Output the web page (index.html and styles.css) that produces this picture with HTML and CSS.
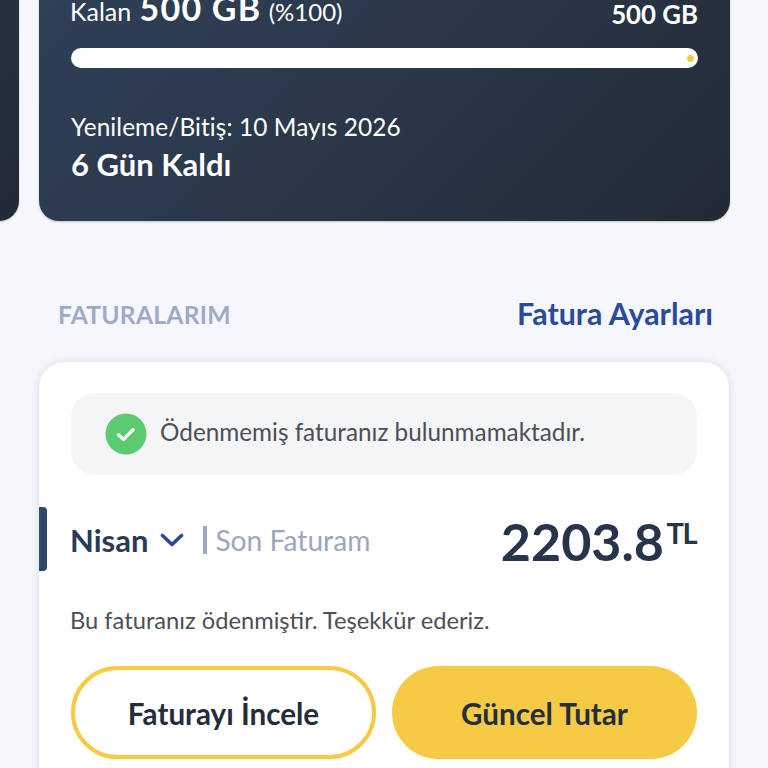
FILE: index.html
```html
<!DOCTYPE html>
<html lang="tr">
<head>
<meta charset="utf-8">
<title>Faturalarım</title>
<link rel="stylesheet" href="styles.css">
</head>
<body>
<div class="page">
  <div class="carousel">
    <div class="plan plan-side"></div>
    <div class="plan">
      <div class="usage">
        <div class="remain">Kalan <b>500 GB</b> <span class="pct">(%100)</span></div>
        <div class="total">500 GB</div>
      </div>
      <div class="bar"><span class="dot"></span></div>
      <div class="renew">Yenileme/Bitiş: 10 Mayıs 2026</div>
      <div class="days">6 Gün Kaldı</div>
    </div>
  </div>
  <div class="section-head">
    <span class="section-title">FATURALARIM</span>
    <span class="section-link">Fatura Ayarları</span>
  </div>
  <div class="bill-card">
    <div class="notice">
      <svg class="check" viewBox="0 0 42 42" aria-hidden="true"><circle cx="21" cy="21" r="20.5" fill="#5acb6f"/><path d="M13.5 21.8l5 4.6 9.5-9.6" fill="none" stroke="#fff" stroke-width="3.4" stroke-linecap="round" stroke-linejoin="round"/></svg>
      <span>Ödenmemiş faturanız bulunmamaktadır.</span>
    </div>
    <div class="bill-row">
      <span class="marker"></span>
      <div class="bill-left">
        <span class="month">Nisan</span>
        <svg class="chev" viewBox="0 0 24 14" aria-hidden="true"><path d="M2.5 2.5l9.5 9 9.5-9" fill="none" stroke="#2c4a9a" stroke-width="3.6" stroke-linecap="round" stroke-linejoin="round"/></svg>
        <span class="sep"></span>
        <span class="last">Son Faturam</span>
      </div>
      <div class="amount">2203.8<sup>TL</sup></div>
    </div>
    <p class="paid">Bu faturanız ödenmiştir. Teşekkür ederiz.</p>
    <div class="actions">
      <div class="btn btn-outline">Faturayı İncele</div>
      <div class="btn btn-solid">Güncel Tutar</div>
    </div>
  </div>
</div>
</body>
</html>
```
FILE: styles.css
```css
* { box-sizing: border-box; }
html, body { margin: 0; padding: 0; }
body { background: #f5f7fa; font-family: "Lato", "Liberation Sans", sans-serif; }
.page { width: 768px; height: 768px; overflow: hidden; background: #f5f7fa; }

.carousel { display: flex; gap: 20px; height: 221px; margin-left: -672px; align-items: flex-end; }
.plan { flex: none; width: 691px; height: 300px; padding: 0 32px; border-radius: 0 0 20px 20px; background: linear-gradient(135deg, #2f4159 0%, #2b384a 50%, #222a36 100%); color: #fff; display: flex; flex-direction: column; justify-content: flex-end; box-shadow: 0 1px 2px rgba(40,50,70,.25); }
.usage { display: flex; justify-content: space-between; align-items: flex-end; height: 29px; }
.remain { font-size: 25px; line-height: 30px; white-space: nowrap; font-weight: 400; margin: 0 0 2px -1px; }
.remain b { font-size: 34px; font-weight: 700; letter-spacing: 1.2px; margin-left: 2px; }
.pct { font-size: 24px; margin-left: 1px; }
.total { font-size: 25.8px; font-weight: 700; line-height: 30px; }
.bar { height: 20px; margin-top: 19px; border-radius: 10px; background: #fff; position: relative; }
.dot { position: absolute; right: 4px; top: 6.5px; width: 7px; height: 7px; border-radius: 50%; background: #f5cb45; }
.renew { margin-top: 43px; font-size: 24.4px; line-height: 32px; font-weight: 400; letter-spacing: .1px; }
.days { margin-top: 3px; margin-bottom: 39px; font-size: 31px; line-height: 36px; font-weight: 700; }

.section-head { display: flex; justify-content: space-between; align-items: center; height: 36px; margin-top: 75px; padding: 0 55px 0 58px; }
.section-title { font-size: 24.7px; font-weight: 700; color: #9dabc9; letter-spacing: .2px; }
.section-link { font-size: 30.4px; font-weight: 700; color: #2c4a9a; margin-top: -2px; }

.bill-card { margin: 30px 0 0 39px; width: 690px; height: 520px; padding: 31px 32px; background: #fff; border-radius: 26px; box-shadow: 0 0 8px rgba(60,70,100,.14); position: relative; }
.notice { display: flex; align-items: center; gap: 13px; height: 82px; padding: 0 34px; border-radius: 24px; background: #f4f5f7; font-size: 24.3px; color: #4c4f56; }
.notice span { margin-top: -5px; }
.check { width: 42px; height: 42px; flex: none; }
.bill-row { display: flex; justify-content: space-between; align-items: center; height: 64px; margin-top: 32px; }
.marker { position: absolute; left: 0; width: 8px; height: 64px; border-radius: 0 4px 4px 0; background: #2f4a68; }
.bill-left { display: flex; align-items: center; padding-top: 2px; }
.month { font-size: 31px; font-weight: 700; color: #2b3a52; margin-left: -1px; }
.chev { width: 24px; height: 14px; margin-left: 12px; }
.sep { width: 4px; height: 28px; margin-left: 19px; background: #9aa5c0; }
.last { margin-left: 8px; font-size: 28.2px; color: #9ca6bd; }
.amount { font-size: 52px; font-weight: 700; line-height: 64px; color: #27344a; position: relative; padding-right: 33px; top: 2px; }
.amount sup { position: absolute; right: 1px; top: 9px; font-size: 29px; line-height: 30px; letter-spacing: -1.5px; }
.paid { margin: 34px 0 0 -1px; font-size: 23.7px; line-height: 30px; color: #4c4f56; }
.actions { display: flex; gap: 16px; margin-top: 31px; }
.btn { flex: none; width: 305px; height: 93px; padding-top: 2px; border-radius: 47px; display: flex; align-items: center; justify-content: center; font-size: 29.6px; font-weight: 700; color: #252d3b; }
.btn-outline { border: 4px solid #f5cb45; background: #fff; }
.btn-solid { background: #f5cb45; }
```
